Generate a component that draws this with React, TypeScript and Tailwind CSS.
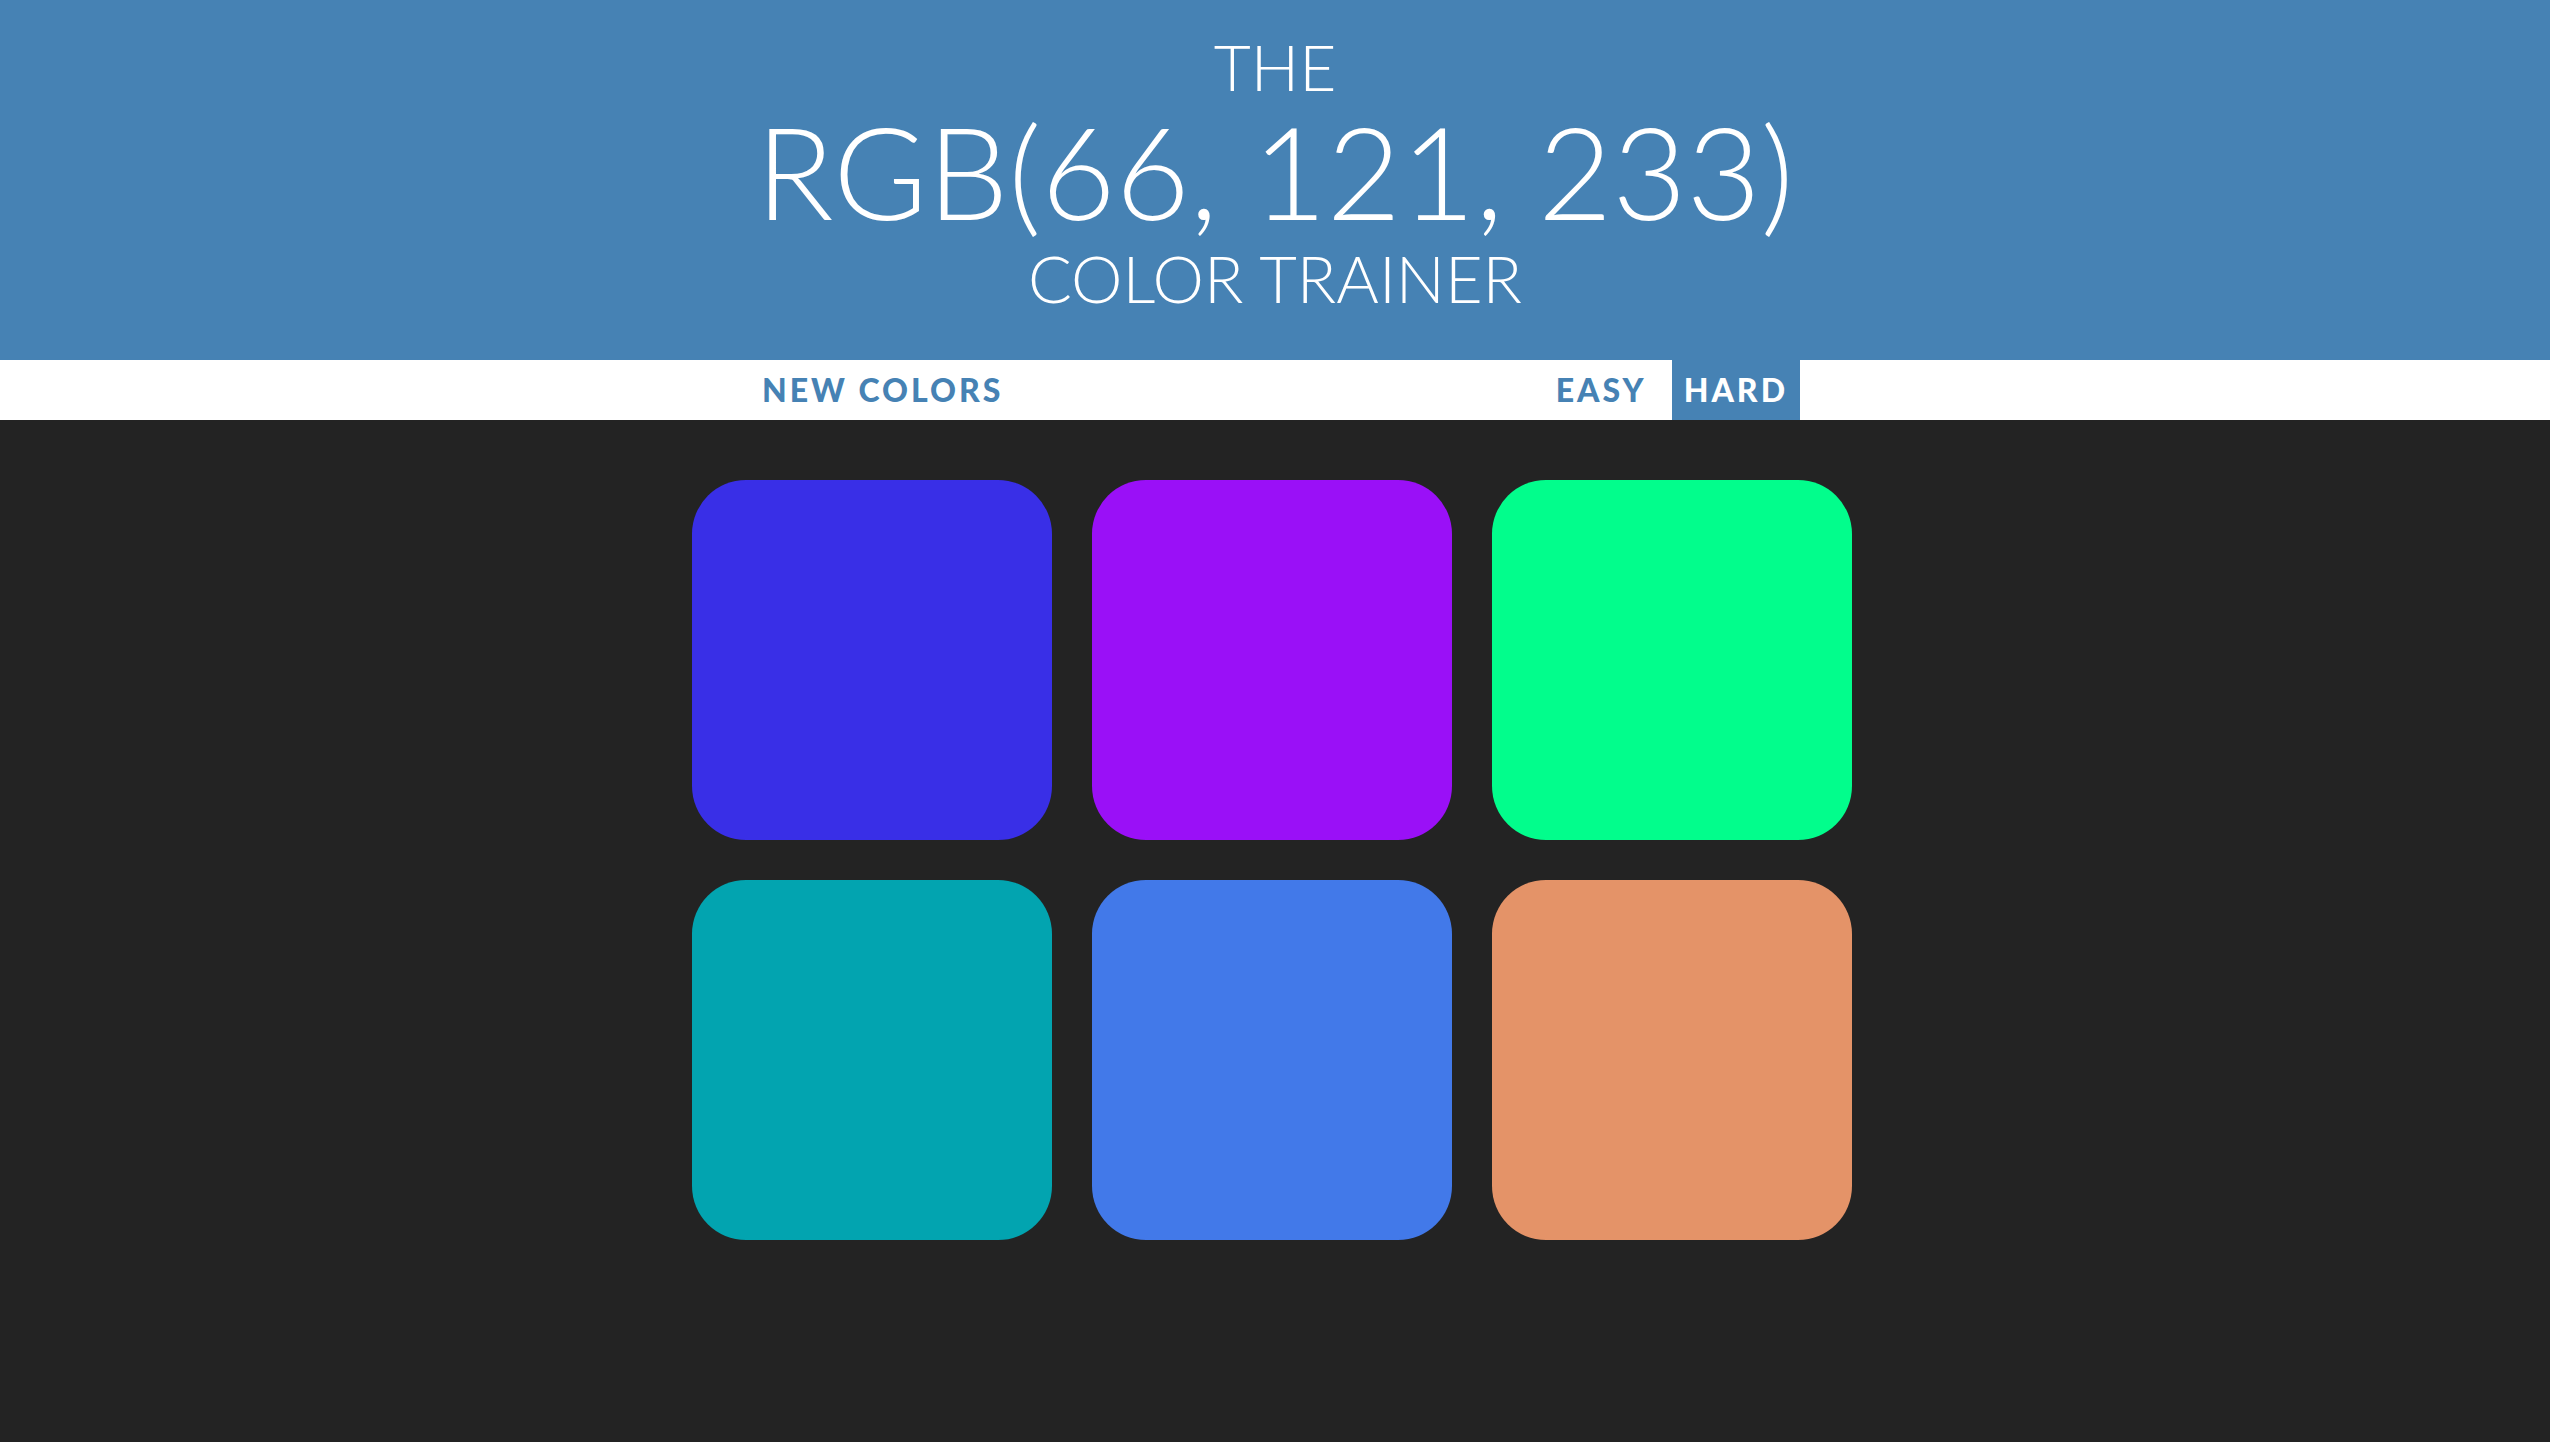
import React, { useState } from 'react'

const colors = [
  "rgb(57, 47, 231)",
  "rgb(154, 16, 247)",
  "rgb(2, 253, 140)",
  "rgb(2, 164, 176)",
  "rgb(66, 121, 233)",
  "rgb(228, 147, 104)",
];

const App = () => {
  const [hard, setHard] = useState(true);
  return (
    <div className="min-h-screen bg-[#232323] font-['Lato',sans-serif]">
      <header className="h-[360px] bg-[#4682b4] text-white flex flex-col items-center uppercase font-light">
        <h1 className="mt-[35px] text-[64px] leading-none">The</h1>
        <p className="mt-[8px] text-[128px] leading-none">RGB(66, 121, 233)</p>
        <h1 className="mt-[11px] text-[65px] leading-none">Color Trainer</h1>
      </header>
      <nav className="h-[60px] bg-white">
        <div className="w-[1050px] h-full mx-auto flex items-stretch">
          <button className="px-3 uppercase font-black text-[32px] tracking-[3px] text-[#4682b4]">New Colors</button>
          <span className="flex-1"></span>
          <button onClick={() => setHard(false)} className={"px-3 uppercase font-black text-[32px] tracking-[3px] " + (hard ? "text-[#4682b4]" : "bg-[#4682b4] text-white")}>Easy</button>
          <button onClick={() => setHard(true)} className={"ml-[13px] px-3 uppercase font-black text-[32px] tracking-[3px] " + (hard ? "bg-[#4682b4] text-white" : "text-[#4682b4]")}>Hard</button>
        </div>
      </nav>
      <main className="w-[1166px] pr-[6px] mx-auto pt-[60px] grid grid-cols-3 gap-10">
        {colors.map((c) => (
          <div key={c} className="w-[360px] h-[360px] rounded-[15%]" style={{ background: c }} />
        ))}
      </main>
    </div>
  )
}

export default App
